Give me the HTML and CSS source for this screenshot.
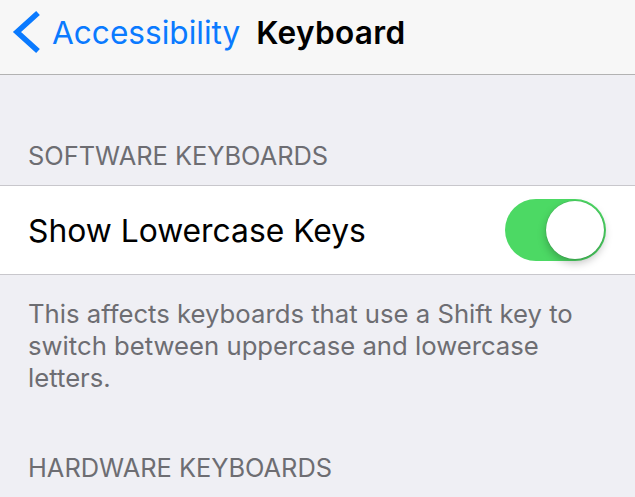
FILE: index.html
```html
<!DOCTYPE html>
<html lang="en">
<head>
<meta charset="utf-8">
<title>Keyboard</title>
<link rel="stylesheet" href="styles.css">
</head>
<body>
<header class="nav">
  <a class="back" href="#">
    <svg class="chevron" width="30" height="46" viewBox="0 0 30 46" aria-hidden="true">
      <polyline points="26,4 5,23 26,42" fill="none" stroke="#0a7aff" stroke-width="5.5" stroke-linecap="butt" stroke-linejoin="miter"/>
    </svg>
    <span class="back-label">Accessibility</span>
  </a>
  <h1 class="title">Keyboard</h1>
</header>
<main>
  <div class="section-header">SOFTWARE KEYBOARDS</div>
  <div class="group">
    <div class="cell">
      <span class="cell-label">Show Lowercase Keys</span>
      <span class="switch on"><span class="knob"></span></span>
    </div>
  </div>
  <p class="section-footer">This affects keyboards that use a Shift key to switch between uppercase and lowercase letters.</p>
  <div class="section-header second">HARDWARE KEYBOARDS</div>
</main>
</body>
</html>
```
FILE: styles.css
```css
html, body {
  margin: 0;
  padding: 0;
}
body {
  background: #efeff4;
  font-family: Inter, "Liberation Sans", sans-serif;
  width: 635px;
  height: 497px;
  overflow: hidden;
}
.nav {
  height: 74px;
  background: #f7f7f7;
  border-bottom: 1px solid #b2b2b2;
  display: flex;
  align-items: center;
  padding-left: 12px;
}
.back {
  display: flex;
  align-items: center;
  text-decoration: none;
  color: #0a7aff;
}
.chevron {
  display: block;
  margin-top: -10px;
}
.back-label {
  font-size: 31.6px;
  margin-left: 10px;
  margin-top: -10px;
}
.title {
  margin: -10px 0 0 16px;
  font-size: 31.6px;
  font-weight: 600;
  letter-spacing: 0.3px;
  color: #000;
}
.section-header {
  padding: 66px 28px 14px;
  font-size: 25.4px;
  line-height: 30px;
  color: #6d6d72;
}
.section-header.second {
  padding-top: 59px;
}
.group {
  background: #fff;
  border-top: 1px solid #c8c7cc;
  border-bottom: 1px solid #c8c7cc;
}
.cell {
  height: 88px;
  display: flex;
  align-items: center;
  justify-content: space-between;
  padding: 0 29px 0 28px;
}
.cell-label {
  font-size: 31.8px;
  color: #000;
}
.switch {
  position: relative;
  width: 101px;
  height: 62px;
  border-radius: 31px;
  background: #4cd964;
}
.knob {
  position: absolute;
  right: 2px;
  top: 2px;
  width: 58px;
  height: 58px;
  border-radius: 50%;
  background: #fff;
  box-shadow: 0 4px 8px rgba(0, 0, 0, 0.25), 0 0 0 0.5px rgba(0, 0, 0, 0.12);
}
.section-footer {
  margin: 0;
  padding: 23px 28px 0;
  font-size: 25.7px;
  line-height: 32px;
  color: #6d6d72;
}
```
